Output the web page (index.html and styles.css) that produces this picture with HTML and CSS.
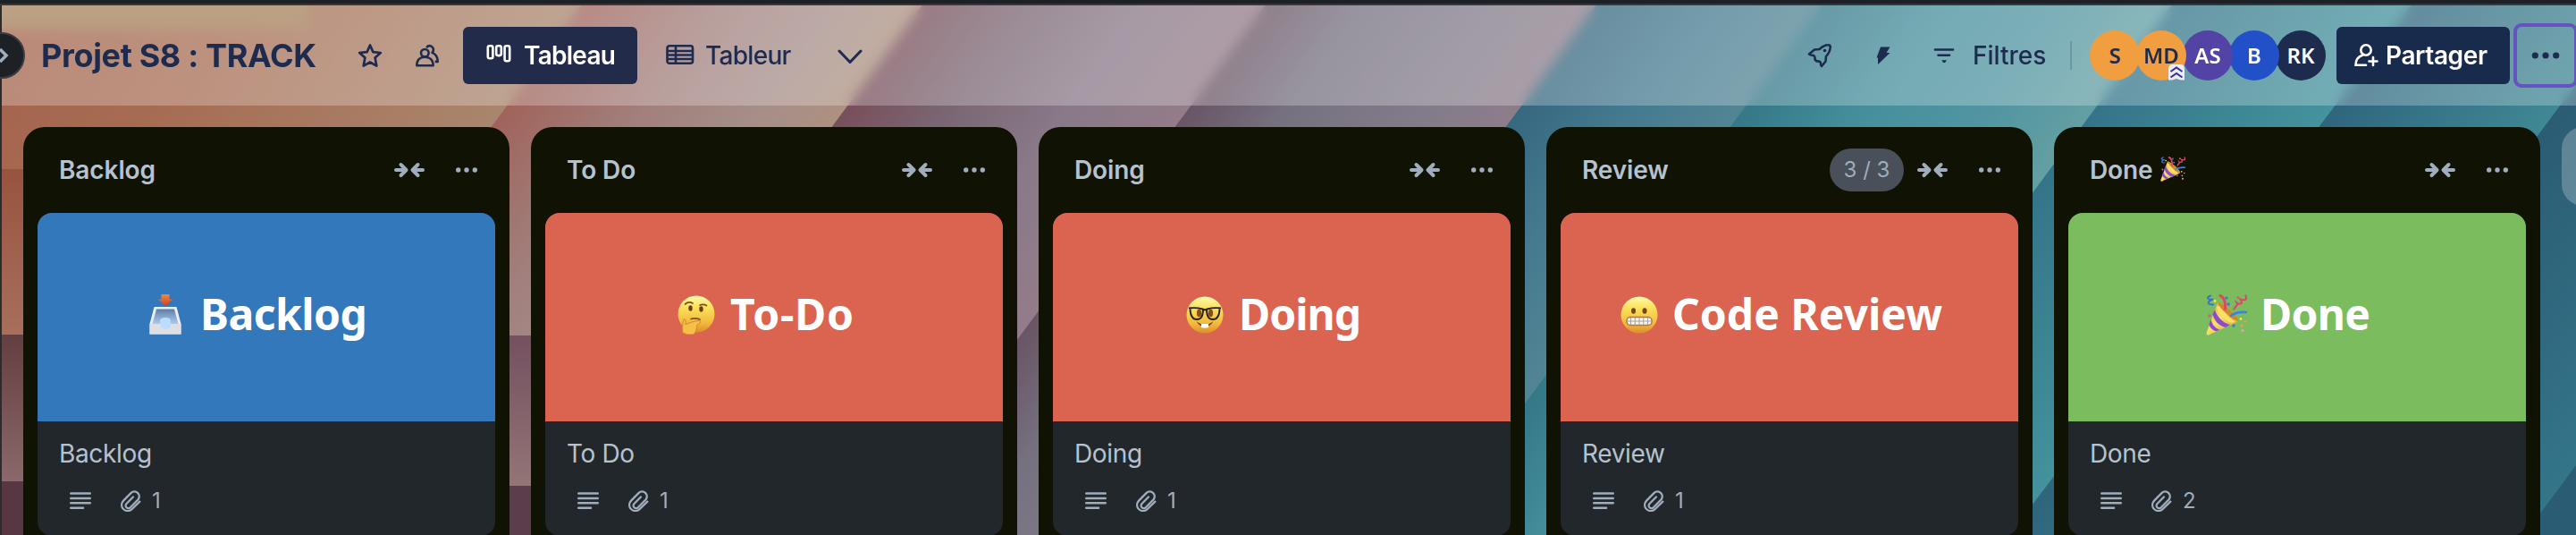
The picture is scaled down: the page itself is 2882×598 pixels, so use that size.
FILE: index.html
```html
<!DOCTYPE html>
<html lang="fr">
<head>
<meta charset="utf-8">
<title>Projet S8 : TRACK</title>
<link rel="stylesheet" href="styles.css">
</head>
<body>
<svg class="defs" width="0" height="0" aria-hidden="true">
  <defs>
    <linearGradient id="face" x1="0" y1="0" x2="0" y2="1"><stop offset="0" stop-color="#fffbb0"/><stop offset=".3" stop-color="#fbe25c"/><stop offset=".75" stop-color="#f2b83c"/><stop offset="1" stop-color="#d98e2b"/></linearGradient>
    <linearGradient id="cone" x1="0" y1="0" x2="1" y2="1"><stop offset="0" stop-color="#d99a30"/><stop offset=".45" stop-color="#fbe06a"/><stop offset="1" stop-color="#cf8f28"/></linearGradient>
    <linearGradient id="tray" x1="0" y1="0" x2="0" y2="1"><stop offset="0" stop-color="#5f7ca3"/><stop offset=".5" stop-color="#86a5cc"/><stop offset="1" stop-color="#a9c9ee"/></linearGradient>
    <linearGradient id="arrow" x1="0" y1="0" x2="0" y2="1"><stop offset="0" stop-color="#f08a3c"/><stop offset="1" stop-color="#cf3a2c"/></linearGradient>
  </defs>
  <symbol id="i-collapse" viewBox="0 0 34 18"><g fill="none" stroke="currentColor" stroke-width="4" stroke-linecap="round" stroke-linejoin="round"><path d="M2 9H13M7.500 3l6 6-6 6"/><path d="M32 9H21M26.500 3l-6 6 6 6"/></g></symbol>
  <symbol id="i-dots" viewBox="0 0 24 6"><g fill="currentColor"><circle cx="2.700" cy="3" r="2.700"/><circle cx="12" cy="3" r="2.700"/><circle cx="21.300" cy="3" r="2.700"/></g></symbol>
  <symbol id="i-desc" viewBox="0 0 24 20"><g stroke="currentColor" stroke-width="2.600" stroke-linecap="round"><path d="M1.300 1.500H22.700M1.300 7H22.700M1.300 12.300H22.700M1.300 17.700H15"/></g></symbol>
  <symbol id="i-clip" viewBox="0 0 24 24"><path fill="none" stroke="currentColor" stroke-width="2.300" stroke-linecap="round" stroke-linejoin="round" d="M22.300 12.600l-8.300 8.200a6.900 6.900 0 0 1-10.600-.4a6.900 6.900 0 0 1 .7-8.800l8.600-8.700a5.400 5.400 0 0 1 7.900 7.300l-8.800 9a3 3 0 0 1-4.300-4.200l7.400-7.500"/></symbol>
  <symbol id="e-party" viewBox="0 0 46 46">
    <path d="M13 9C17 8 38 25 36 30C35 32 14 40 3 45.500C1 46 0 44.500 .8 42.500Z" fill="url(#cone)"/>
    <path d="M13 9C17 8 38 25 36 30C32 31 13 14 13 9Z" fill="#c98a2a"/>
    <path d="M15 13C17 19 26 28 33 30L29 32C22 30 13 21 12 14Z" fill="#fbdf66"/>
    <path d="M10 17c2 8 9 15 17 17l-5 3C14 35 9 29 7.500 22zM5.500 28c1.500 6 5 10 10 11.500l-4 1.800C7 40 4 36.500 3.400 33.500z" fill="#8b4bd0"/>
    <path d="M16 1.500c5 2 6 7 5.500 15" fill="none" stroke="#dc4a60" stroke-width="3" stroke-linecap="round"/>
    <path d="M28 24c5-4 10-4.500 17-4" fill="none" stroke="#3c82e6" stroke-width="2.600" stroke-linecap="round"/>
    <path d="M5 1.500c-7 3 0 5 3 4c-8 3-6 6 0 6" fill="none" stroke="#3a6fd0" stroke-width="2" stroke-linecap="round"/>
    <path d="M44.500 1.500c2 6-2 5-6 4c4 5-1 6-4 4c2 4-2 3-3 7" fill="none" stroke="#d84a68" stroke-width="2.200" stroke-linecap="round"/>
    <g fill="#3c78dc"><circle cx="23" cy="4" r="1.600"/><circle cx="25" cy="11" r="1.700"/><circle cx="31" cy="35" r="1.700"/></g>
    <g fill="#e05a72"><circle cx="36" cy="3.500" r="1.600"/><circle cx="4" cy="24" r="1.700"/></g>
    <g fill="#f5a040"><circle cx="40" cy="35" r="1.400"/><circle cx="44" cy="30.500" r="1.300"/></g>
    <circle cx="39" cy="27.500" r="1.400" fill="#f6e257"/><circle cx="10" cy="7.500" r="1.400" fill="#f6e257"/><circle cx="41" cy="40.500" r="1.600" fill="#f2a0b4"/>
  </symbol>
</svg>

<svg class="wallpaper" viewBox="0 0 2882 598" aria-hidden="true">
  <defs>
    <linearGradient id="s0" gradientUnits="userSpaceOnUse" x1="0" y1="0" x2="480" y2="340"><stop offset="0" stop-color="#a4624c"/><stop offset=".35" stop-color="#a66c52"/><stop offset="1" stop-color="#a98a72"/></linearGradient>
    <linearGradient id="gA" gradientUnits="userSpaceOnUse" x1="655" y1="0" x2="902" y2="183"><stop offset="0" stop-color="#a0635b"/><stop offset=".4" stop-color="#a17f7c"/><stop offset=".75" stop-color="#a68e89"/><stop offset="1" stop-color="#ad9180"/></linearGradient>
    <linearGradient id="gB" gradientUnits="userSpaceOnUse" x1="1036" y1="0" x2="1285" y2="185"><stop offset="0" stop-color="#784f5a"/><stop offset=".3" stop-color="#7a6673"/><stop offset=".65" stop-color="#897989"/><stop offset="1" stop-color="#947c89"/></linearGradient>
    <linearGradient id="gC" gradientUnits="userSpaceOnUse" x1="1420" y1="0" x2="1659" y2="177"><stop offset="0" stop-color="#695565"/><stop offset=".3" stop-color="#767180"/><stop offset=".7" stop-color="#827b89"/><stop offset="1" stop-color="#8d7d8b"/></linearGradient>
    <linearGradient id="gD" gradientUnits="userSpaceOnUse" x1="1790" y1="0" x2="1952" y2="120"><stop offset="0" stop-color="#36687f"/><stop offset=".5" stop-color="#457a8f"/><stop offset="1" stop-color="#528594"/></linearGradient>
    <linearGradient id="gE" gradientUnits="userSpaceOnUse" x1="2041" y1="0" x2="2295" y2="188"><stop offset="0" stop-color="#357888"/><stop offset=".35" stop-color="#458f9b"/><stop offset=".7" stop-color="#5195a1"/><stop offset="1" stop-color="#649fa3"/></linearGradient>
    <linearGradient id="gF" gradientUnits="userSpaceOnUse" x1="2434" y1="0" x2="2607" y2="128"><stop offset="0" stop-color="#34748a"/><stop offset=".5" stop-color="#3c8492"/><stop offset="1" stop-color="#44939d"/></linearGradient>
    <linearGradient id="gG" gradientUnits="userSpaceOnUse" x1="2702" y1="0" x2="2863" y2="119"><stop offset="0" stop-color="#2f667e"/><stop offset="1" stop-color="#3f8894"/></linearGradient>
    <linearGradient id="gH" gradientUnits="userSpaceOnUse" x1="2951" y1="0" x2="3157" y2="153"><stop offset="0" stop-color="#2b5c73"/><stop offset="1" stop-color="#34758a"/></linearGradient>
    <linearGradient id="l1" x1="0" y1="0" x2="0" y2="1"><stop offset="0" stop-color="#98533f"/><stop offset="1" stop-color="#a76f5c"/></linearGradient>
    <linearGradient id="l2" x1="0" y1="0" x2="0" y2="1"><stop offset="0" stop-color="#643f41"/><stop offset="1" stop-color="#8a686c"/></linearGradient>
    <linearGradient id="l3" x1="0" y1="0" x2="0" y2="1"><stop offset="0" stop-color="#745060"/><stop offset="1" stop-color="#937576"/></linearGradient>
  </defs>
  <rect width="2882" height="598" fill="url(#s0)"/>
  <rect width="345" height="32" fill="#a5805a"/>
  <path d="M655 0H2882V598H211Z" fill="url(#gA)"/>
  <path d="M1036 0H2882V598H592Z" fill="url(#gB)"/>
  <path d="M1420 0H2882V598H976Z" fill="url(#gC)"/>
  <path d="M1790 0H2882V598H1346Z" fill="url(#gD)"/>
  <path d="M2041 0H2882V598H1597Z" fill="url(#gE)"/>
  <path d="M2434 0H2882V598H1990Z" fill="url(#gF)"/>
  <path d="M2702 0H2882V598H2248Z" fill="url(#gG)"/>
  <path d="M2882 94V598H2507Z" fill="url(#gH)"/>
  <path d="M2882 520V598H2824Z" fill="#2a5c74"/>
  <rect x="0" y="189" width="40" height="185" fill="url(#l1)"/>
  <rect x="0" y="374" width="40" height="164" fill="url(#l2)"/>
  <rect x="0" y="538" width="40" height="60" fill="#563742"/>
  <rect x="560" y="375" width="40" height="168" fill="url(#l3)"/>
  <rect x="560" y="543" width="40" height="55" fill="#5b3e4b"/>
</svg>

<div class="app">
  <div class="topbar"></div>
  <header class="header">
    <h1 class="board-name">Projet S8 : TRACK</h1>
    <svg class="ico star" width="32" height="32" viewBox="0 0 32 32"><path d="M16 4.500l3.400 7.600 8.400.9-6.200 5.600 1.700 9-7.300-4.100-7.300 4.100 1.700-9L4.200 13l8.400-.9z" fill="none" stroke="currentColor" stroke-width="2.700" stroke-linejoin="round"/></svg>
    <svg class="ico people" width="32" height="32" viewBox="0 0 32 32"><g fill="none" stroke="currentColor" stroke-width="2.600" stroke-linejoin="round"><circle cx="13.300" cy="13.300" r="4.300"/><path d="M4.300 27.300c0-6 3.500-9.600 9-9.600s9.300 3.600 9.300 9.600z"/><path d="M15.300 7.300c1-2 3-2.600 5-1.700c3 1.300 3.500 5 1.200 7.300c4.300 1.700 6.200 5 6.200 10h-3"/></g></svg>
    <div class="view active">
      <svg width="28" height="22" viewBox="0 0 28 22"><g fill="none" stroke="currentColor" stroke-width="2.600"><rect x="1.800" y="2.300" width="5.600" height="14" rx="2"/><rect x="11.200" y="2.300" width="5.600" height="10.800" rx="2"/><rect x="20.600" y="2.300" width="5.600" height="17" rx="2"/></g></svg>
      <span class="t-tableau">Tableau</span>
    </div>
    <svg class="ico sheet" width="32" height="24" viewBox="0 0 32 24"><g fill="none" stroke="currentColor" stroke-width="2.600"><rect x="1.500" y="2.300" width="28.500" height="19.500" rx="2.500"/><path d="M1.500 8h28.500M1.500 12.500h28.500M1.500 17h28.500M11 2v20"/></g></svg>
    <span class="t-tableur">Tableur</span>
    <svg class="ico chev" width="28" height="18" viewBox="0 0 28 18"><path d="M2 3l12 12.500L26 3" fill="none" stroke="currentColor" stroke-width="3" stroke-linecap="round" stroke-linejoin="round"/></svg>
    <div class="tools">
      <svg width="28" height="28" viewBox="0 0 28 28"><path d="M2 12.500L8 7.500L13.500 7Q18 2.500 23 2.300Q26 2 25.700 5Q25.500 10 21 15L20.500 20.500L16 26Q14.800 25 14.700 21.500Q13.500 20 10.500 20.500L8.500 18.500Q9 15 7 14Q4 14 2 12.500Z" fill="none" stroke="currentColor" stroke-width="2.600" stroke-linejoin="round"/><circle cx="19.500" cy="8.500" r="1.800" fill="currentColor"/></svg>
      <svg class="bolt" width="16" height="20" viewBox="0 0 16 20"><path d="M5 0.500H15.500L11.500 7H15.500L2 20V12.500H0.500Z" fill="currentColor"/></svg>
      <svg class="filter" width="24" height="18" viewBox="0 0 24 18"><path d="M2 2.500H22M5.500 8.800H18" stroke="currentColor" stroke-width="2.600" stroke-linecap="round"/><path d="M9.300 14.200H15L13 17h-2z" fill="currentColor"/></svg>
      <span class="t-filtres">Filtres</span>
      <span class="divider"></span>
      <div class="avatars">
        <span class="avatar orange">S</span>
        <span class="avatar orange">MD<svg class="rank" width="18" height="18" viewBox="0 0 18 18"><path d="M0 5q0-5 5-5h8q5 0 5 5v12.500h-4l-5-1.500-5 1.500H0z" fill="#ececf4"/><path d="M2.500 8L9 3.500 15.500 8M2.500 14.500L9 10l6.500 4.500" fill="none" stroke="#332e9c" stroke-width="2"/></svg></span>
        <span class="avatar purple">AS</span>
        <span class="avatar blue">B</span>
        <span class="avatar navy">RK</span>
      </div>
      <div class="share">
        <svg width="28" height="28" viewBox="0 0 28 28"><g fill="none" stroke="currentColor" stroke-width="2.600" stroke-linecap="round"><ellipse cx="14" cy="8" rx="5.700" ry="5.700"/><path d="M10 13.800C5 15.500 2.500 19 2.500 24.700H14M22 16v9M17.500 20.500h9"/></g></svg>
        <span class="t-partager">Partager</span>
      </div>
      <div class="more"><svg width="32" height="8" viewBox="0 0 32 8"><g fill="currentColor"><circle cx="4.300" cy="4" r="3.600"/><circle cx="16" cy="4" r="3.600"/><circle cx="27.700" cy="4" r="3.600"/></g></svg></div>
    </div>
  </header>

  <main class="board">
    <section class="list">
      <div class="list-head"><h2>Backlog</h2><svg class="col" width="34" height="18"><use href="#i-collapse"/></svg><svg class="dots" width="24" height="6"><use href="#i-dots"/></svg></div>
      <article class="card">
        <div class="cover c-blue"><svg class="emo-tray" width="36" height="45" viewBox="0 0 36 45"><path d="M5.500 14h25l5 19v11.500H.5V33z" fill="#eceef1"/><path d="M8 16.500h20L32.500 33h-29z" fill="url(#tray)"/><path d="M13.500 0h9v5.500H26L18 13.500 10 5.500h3.500z" fill="url(#arrow)"/><path d="M.5 33H12q1 6 6 6t6-6h11.500v11.500H.5z" fill="#dddfe3"/><path d="M12 30q0-4 6-4t6 4v3q0 6-6 6t-6-6z" fill="#bcdcff"/></svg><span class="k-backlog">Backlog</span></div>
        <div class="body"><h3>Backlog</h3><div class="badges"><svg width="24" height="20"><use href="#i-desc"/></svg><svg class="clip" width="24" height="24"><use href="#i-clip"/></svg><span>1</span></div></div>
      </article>
    </section>
    <section class="list">
      <div class="list-head"><h2>To Do</h2><svg class="col" width="34" height="18"><use href="#i-collapse"/></svg><svg class="dots" width="24" height="6"><use href="#i-dots"/></svg></div>
      <article class="card">
        <div class="cover c-red"><svg class="emo-think" width="42" height="44" viewBox="0 0 42 44"><circle cx="21" cy="21" r="20.500" fill="url(#face)"/><g fill="#6a3f14"><ellipse cx="14.500" cy="14.500" rx="2.200" ry="3.200"/><ellipse cx="26.500" cy="15.500" rx="2.200" ry="3.200"/></g><path d="M8.500 10q4-3.500 8.500-1M25 11q4-1.500 7.500.5M15 26.500q5-1.500 10 .5" fill="none" stroke="#7c4f1c" stroke-width="1.700" stroke-linecap="round"/><path d="M6 42c-1-5-.5-9 1-15c2-1.500 2.500 2 2 5.500c4-1 9-4 15-4c3 0 2 3-2 4.500c-1 4-1 11-6 11q-6 .5-10-2z" fill="#f5bf48" stroke="#cf8a2b" stroke-width="1"/></svg><span class="k-todo">To-Do</span></div>
        <div class="body"><h3>To Do</h3><div class="badges"><svg width="24" height="20"><use href="#i-desc"/></svg><svg class="clip" width="24" height="24"><use href="#i-clip"/></svg><span>1</span></div></div>
      </article>
    </section>
    <section class="list">
      <div class="list-head"><h2>Doing</h2><svg class="col" width="34" height="18"><use href="#i-collapse"/></svg><svg class="dots" width="24" height="6"><use href="#i-dots"/></svg></div>
      <article class="card">
        <div class="cover c-red"><svg class="emo-nerd" width="42" height="42" viewBox="0 0 42 42"><circle cx="21" cy="21" r="20.500" fill="url(#face)"/><g fill="#8a4f18"><ellipse cx="14.500" cy="19" rx="2.600" ry="4.200"/><ellipse cx="27.500" cy="19" rx="2.600" ry="4.200"/></g><g fill="none" stroke="#23211c" stroke-width="1.900"><path d="M3 13.500Q11 12.500 18.500 14.500L21 15.500L23.500 14.500Q31 12.500 39 13.500"/><path d="M4.500 14.500Q5 26 12 26T19 15M37.500 14.500Q37 26 30 26T23 15"/></g><path d="M11.500 28q9.500 8 19 0q-3 6-9.500 6t-9.500-6z" fill="#7a3c18"/><path d="M17 31h8v4q-4 1-8 0z" fill="#fff"/></svg><span class="k-doing">Doing</span></div>
        <div class="body"><h3>Doing</h3><div class="badges"><svg width="24" height="20"><use href="#i-desc"/></svg><svg class="clip" width="24" height="24"><use href="#i-clip"/></svg><span>1</span></div></div>
      </article>
    </section>
    <section class="list">
      <div class="list-head"><h2>Review</h2><span class="limit">3 / 3</span><svg class="col" width="34" height="18"><use href="#i-collapse"/></svg><svg class="dots" width="24" height="6"><use href="#i-dots"/></svg></div>
      <article class="card">
        <div class="cover c-red"><svg class="emo-grim" width="42" height="42" viewBox="0 0 42 42"><circle cx="21" cy="21" r="20.500" fill="url(#face)"/><g fill="#7a4516"><ellipse cx="14.500" cy="16.500" rx="2.500" ry="3.200"/><ellipse cx="27" cy="16.500" rx="2.500" ry="3.200"/></g><rect x="7" y="23.500" width="28" height="9" rx="4" fill="#f7f5f2" stroke="#a87a4a" stroke-width="1.500"/><path d="M7 28h28M11.500 24v8.500M16.300 24v8.500M21 24v8.500M25.700 24v8.500M30.500 24v8.500" stroke="#a9a098" stroke-width="1"/></svg><span class="k-review">Code Review</span></div>
        <div class="body"><h3>Review</h3><div class="badges"><svg width="24" height="20"><use href="#i-desc"/></svg><svg class="clip" width="24" height="24"><use href="#i-clip"/></svg><span>1</span></div></div>
      </article>
    </section>
    <section class="list">
      <div class="list-head"><h2>Done</h2><svg class="emo-title" width="28" height="28"><use href="#e-party"/></svg><svg class="col" width="34" height="18"><use href="#i-collapse"/></svg><svg class="dots" width="24" height="6"><use href="#i-dots"/></svg></div>
      <article class="card">
        <div class="cover c-green"><svg class="emo-party" width="46" height="46"><use href="#e-party"/></svg><span class="k-done">Done</span></div>
        <div class="body"><h3>Done</h3><div class="badges"><svg width="24" height="20"><use href="#i-desc"/></svg><svg class="clip" width="24" height="24"><use href="#i-clip"/></svg><span>2</span></div></div>
      </article>
    </section>
    <div class="add-list"></div>
  </main>
</div>
<div class="edge"></div>
<div class="toggle"><svg width="12" height="18" viewBox="0 0 12 18"><path d="M2 2l7 7-7 7" fill="none" stroke="currentColor" stroke-width="3.500"/></svg></div>
</body>
</html>
```
FILE: styles.css
```css
* { box-sizing: border-box; margin: 0; }
body { width: 2882px; height: 598px; overflow: hidden; position: relative; background: #1d2125; font-family: Inter, "Liberation Sans", sans-serif; }
svg { display: block; flex: none; }
.defs { position: absolute; }
.wallpaper { position: absolute; left: 0; top: 0; width: 2882px; height: 598px; }
.app { position: relative; width: 2882px; height: 598px; overflow: hidden; display: flex; flex-direction: column; }
.topbar { flex: none; height: 6px; background: #1d2125; border-bottom: 2px solid #35393d; }

.header { flex: none; height: 112px; display: flex; align-items: center; padding-left: 46px; background: rgba(255,255,255,.25); backdrop-filter: blur(7px); color: #1d2b4f; white-space: nowrap; font-size: 28px; font-weight: 500; line-height: 40px; }
.header > *, .tools > *, .avatar { flex-shrink: 0; }
.board-name { width: 307px; font-size: 36px; line-height: 48px; font-weight: 700; letter-spacing: -.35px; }
.star { margin-left: 45px; }
.people { margin-left: 32px; }
.view { display: flex; align-items: center; width: 195px; height: 64px; margin-left: 24px; padding-left: 26px; border-radius: 6px; background: #222b4a; color: #fff; font-weight: 600; }
.view svg { margin-top: -4px; }
.t-tableau { margin-left: 14px; letter-spacing: -.75px; }
.sheet { margin-left: 32px; margin-top: -3px; }
.t-tableur { width: 98px; margin-left: 12px; letter-spacing: -.7px; }
.chev { margin-left: 50px; margin-top: 1px; }

.tools { margin-left: 1057px; display: flex; align-items: center; }
.bolt { margin-left: 49px; }
.filter { margin-left: 48px; }
.t-filtres { width: 81px; margin-left: 20px; }
.divider { width: 2px; height: 32px; margin-left: 28px; background: rgba(40,70,95,.25); }
.avatars { display: flex; margin-left: 20px; }
.avatar { position: relative; width: 56px; height: 56px; margin-right: -4px; border-radius: 50%; text-align: center; font: 600 24px/56px "Noto Sans", sans-serif; color: #fff; }
.avatar:nth-child(1) { z-index: 5; }
.avatar:nth-child(2) { z-index: 4; }
.avatar:nth-child(3) { z-index: 3; }
.avatar:nth-child(4) { z-index: 2; }
.orange { background: #f19e40; color: #1d2b4f; }
.purple { background: #5243a4; }
.blue { background: #2150c8; }
.navy { background: #1d2b4f; }
.rank { position: absolute; right: 2px; bottom: 0; }
.share { display: flex; align-items: center; width: 194px; height: 64px; margin-left: 16px; padding-left: 19px; border-radius: 6px; background: #192b4d; color: #fff; font-weight: 600; }
.t-partager { margin-left: 8px; letter-spacing: -.4px; }
.more { display: flex; align-items: center; justify-content: center; width: 72px; height: 72px; margin-left: 4px; border: 4px solid #6554c0; border-radius: 9px; }

.board { display: flex; gap: 24px; padding: 24px 0 0 26px; }
.list { flex: none; width: 544px; height: 480px; padding: 0 16px; border-radius: 24px 24px 0 0; background: #101204; }
.list-head { display: flex; align-items: center; height: 96px; padding: 0 20px 0 24px; color: #9fadbc; }
.list-head h2 { font-size: 28px; line-height: 40px; font-weight: 600; letter-spacing: -.1px; color: #b6c2cf; }
.col { margin-left: auto; }
.dots { margin-left: 35px; }
.limit { width: 83px; height: 48px; margin-left: auto; border-radius: 24px; background: #49505a; text-align: center; font-size: 24px; line-height: 48px; }
.limit + .col { margin-left: 15px; }
.emo-title { margin-left: 8px; margin-top: -2px; }
.card { height: 361px; border-radius: 16px; overflow: hidden; background: #22272b; }
.cover { display: flex; align-items: center; height: 233px; color: #fff; font: 700 48px/64px "Noto Sans", sans-serif; white-space: nowrap; }
.cover svg { margin-top: -6px; }
.cover span { margin-top: -8px; }
.c-blue { background: #3478bc; }
.c-red { background: #da6450; }
.c-green { background: #7abc5e; }
.emo-tray { margin-left: 125px; }
.emo-think { margin-left: 148px; }
.emo-nerd { margin-left: 149px; }
.emo-grim { margin-left: 67px; }
.emo-party { margin-left: 154px; }
.k-backlog { margin-left: 21px; letter-spacing: -.5px; }
.k-todo { margin-left: 17px; letter-spacing: .8px; }
.k-doing { margin-left: 17px; letter-spacing: -1px; }
.k-review { margin-left: 16px; }
.k-done { margin-left: 15px; letter-spacing: -.7px; }
.body { padding: 16px 24px; color: #9fadbc; }
.body h3 { font-size: 28px; line-height: 40px; font-weight: 400; letter-spacing: -.35px; color: #b6c2cf; }
.badges { display: flex; align-items: center; height: 32px; margin-top: 17px; padding-left: 12px; }
.badges .clip { margin-left: 32px; }
.badges span { margin-left: 12px; font-size: 24px; line-height: 32px; }
.add-list { flex: none; width: 544px; height: 88px; border-radius: 24px; background: rgba(255,255,255,.24); }

.edge { position: absolute; left: 0; top: 6px; width: 2px; height: 592px; background: #2a2c30; }
.toggle { position: absolute; left: -24px; top: 36px; width: 52px; height: 52px; padding: 15px 0 0 20px; border: 2px solid #3a3d41; border-radius: 50%; background: #1d2125; color: #9fadbc; }
```
